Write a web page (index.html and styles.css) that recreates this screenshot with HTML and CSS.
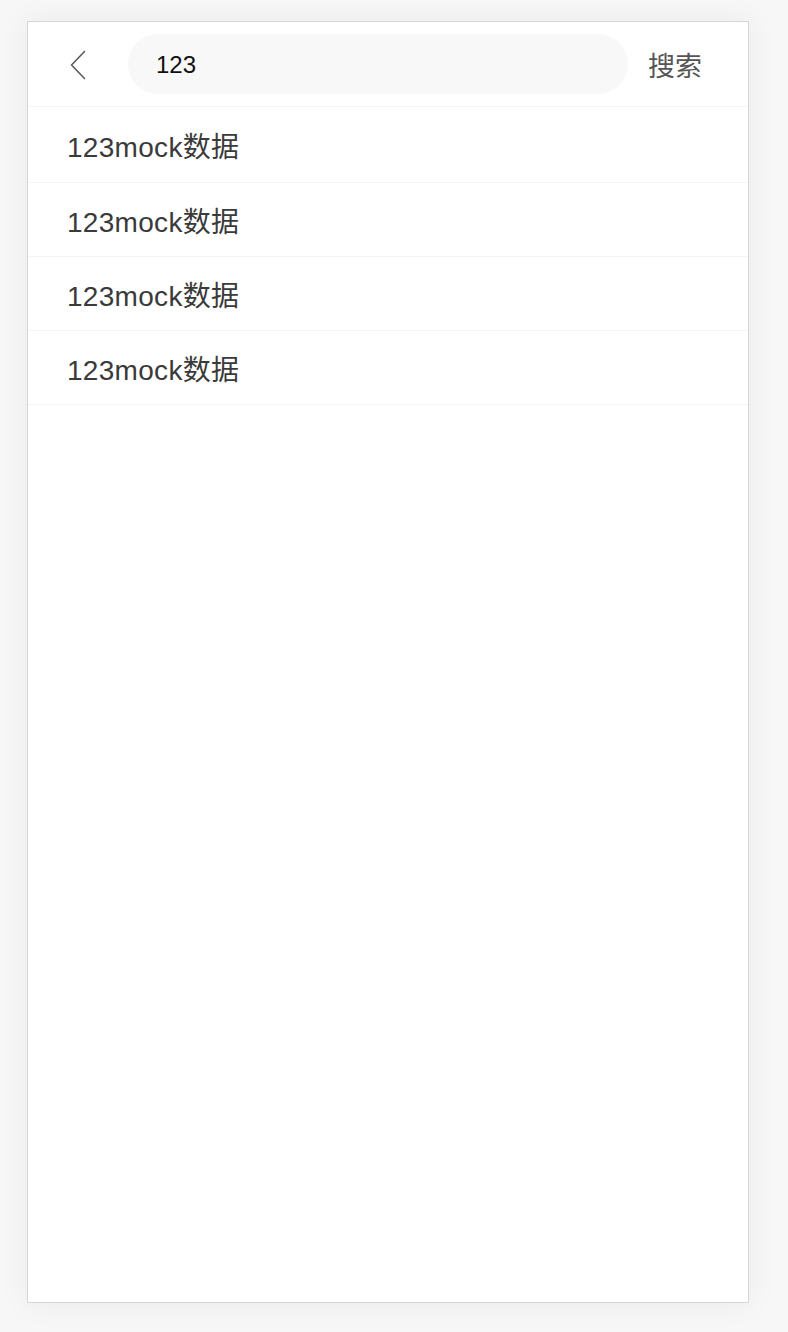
FILE: index.html
```html
<!DOCTYPE html>
<html lang="zh">
<head>
<meta charset="utf-8">
<title>搜索</title>
<link rel="stylesheet" href="styles.css">
</head>
<body>
<div class="phone">
  <header class="search-header">
    <button class="back" aria-label="返回">
      <svg width="16" height="30" viewBox="0 0 16 30"><path d="M14.5 1.5 L1.5 15 L14.5 28.5" fill="none" stroke="#555" stroke-width="1.5" stroke-linecap="round" stroke-linejoin="round"/></svg>
    </button>
    <div class="search-box"><span class="query">123</span></div>
    <span class="search-btn">搜索</span>
  </header>
  <ul class="results">
    <li class="item">123mock数据</li>
    <li class="item">123mock数据</li>
    <li class="item">123mock数据</li>
    <li class="item">123mock数据</li>
  </ul>
</div>
</body>
</html>
```
FILE: styles.css
```css
html, body {
  margin: 0;
  padding: 0;
}
body {
  background: #f7f7f7;
  font-family: "Liberation Sans", "Noto Sans CJK SC", sans-serif;
  padding: 21px 0 0 27px;
  height: 1332px;
  box-sizing: border-box;
}
.phone {
  width: 720px;
  height: 1280px;
  background: #fff;
  border: 1px solid #d6d6d6;
  box-shadow: 0 0 30px rgba(0, 0, 0, 0.06);
  display: flex;
  flex-direction: column;
}
.search-header {
  height: 84px;
  border-bottom: 1px solid #f4f4f4;
  display: flex;
  align-items: center;
  box-sizing: content-box;
}
.back {
  width: 100px;
  height: 60px;
  padding: 2px 0 0 42px;
  border: 0;
  background: none;
  display: flex;
  align-items: center;
  box-sizing: border-box;
}
.back svg {
  display: block;
}
.search-box {
  width: 500px;
  height: 60px;
  border-radius: 30px;
  background: #f8f8f8;
  display: flex;
  align-items: center;
  padding: 2px 0 0 28px;
  box-sizing: border-box;
}
.query {
  font-size: 24px;
  color: #111;
}
.search-btn {
  margin-left: 20px;
  font-size: 27px;
  color: #555;
}
.results {
  list-style: none;
  margin: 0;
  padding: 1px 0 0;
}
.item {
  height: 73px;
  border-bottom: 1px solid #f4f4f4;
  display: flex;
  align-items: center;
  padding-left: 39px;
  font-size: 28px;
  letter-spacing: 0.3px;
  color: #3a3a3a;
}
.item:first-child {
  height: 74px;
}
```
